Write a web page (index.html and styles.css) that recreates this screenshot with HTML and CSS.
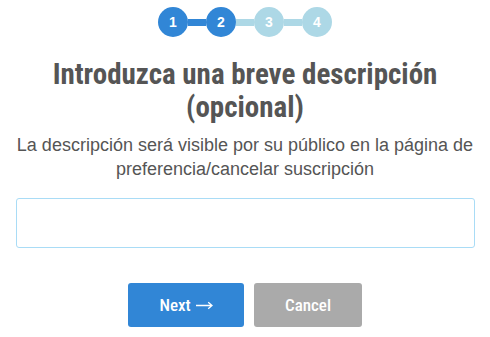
FILE: index.html
```html
<!DOCTYPE html>
<html lang="es">
<head>
<meta charset="utf-8">
<link rel="stylesheet" href="styles.css">
</head>
<body>
<div class="page">
  <div class="stepper">
    <div class="step active">1</div>
    <div class="bar active"></div>
    <div class="step active">2</div>
    <div class="bar"></div>
    <div class="step">3</div>
    <div class="bar"></div>
    <div class="step">4</div>
  </div>
  <h1 class="title">Introduzca una breve descripción (opcional)</h1>
  <p class="subtitle">La descripción será visible por su público en la página de preferencia/cancelar suscripción</p>
  <input class="field" type="text">
  <div class="actions">
    <button class="btn btn-next">Next <svg class="arrow" width="17" height="9" viewBox="0 0 17 9" aria-hidden="true"><path d="M0 4.5H16M12.2 1.2L16 4.5L12.2 7.8" fill="none" stroke="#fff" stroke-width="1.3"/></svg></button>
    <button class="btn btn-cancel">Cancel</button>
  </div>
</div>
</body>
</html>
```

FILE: styles.css
```css
html, body {
  margin: 0;
  padding: 0;
  background: #fff;
}
.page {
  width: 490px;
  display: flex;
  flex-direction: column;
  align-items: center;
  font-family: "Liberation Sans", Arial, sans-serif;
}
.stepper {
  display: flex;
  align-items: center;
  margin-top: 7px;
  height: 30px;
}
.step {
  width: 30px;
  height: 30px;
  border-radius: 50%;
  background: #add8e6;
  color: #fff;
  font-family: "Liberation Sans", Arial, sans-serif;
  font-weight: bold;
  font-size: 14px;
  display: flex;
  align-items: center;
  justify-content: center;
}
.step.active {
  background: #3186d6;
}
.bar {
  width: 18px;
  height: 7px;
  background: #add8e6;
}
.bar.active {
  background: #3186d6;
}
.title {
  margin: 21px 0 0;
  width: 470px;
  text-align: center;
  font-family: "Roboto Condensed", Roboto, sans-serif;
  font-stretch: condensed;
  font-weight: 700;
  font-size: 29px;
  line-height: 33px;
  color: #555;
}
.subtitle {
  margin: 10px 0 0;
  width: 480px;
  text-align: center;
  font-size: 18px;
  line-height: 23.5px;
  color: #555;
}
.field {
  margin-top: 17px;
  box-sizing: border-box;
  width: 459px;
  height: 50px;
  border: 1px solid #a9dcf6;
  border-radius: 3px;
  outline: none;
  padding: 0 10px;
}
.actions {
  display: flex;
  gap: 10px;
  margin-top: 35px;
}
.btn {
  height: 44px;
  border: none;
  border-radius: 3px;
  color: #fff;
  font-family: "Roboto Condensed", Roboto, sans-serif;
  font-stretch: condensed;
  font-weight: 500;
  font-size: 17px;
  padding: 0;
}
.arrow {
  vertical-align: 1px;
  margin-left: 1px;
}
.btn-next {
  width: 116px;
  background: #3186d6;
}
.btn-cancel {
  width: 108px;
  background: #aaa;
}
```
